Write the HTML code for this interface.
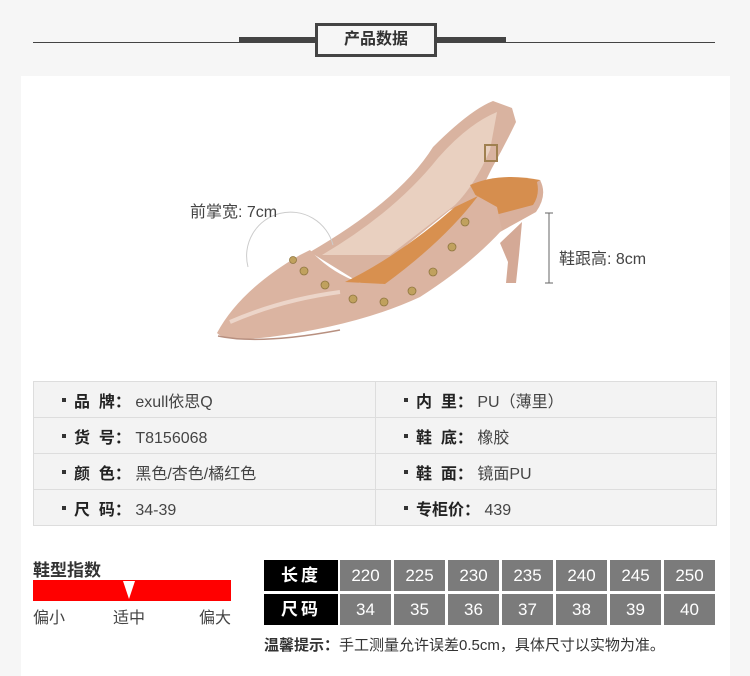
<!DOCTYPE html>
<html><head><meta charset="utf-8"><style>
body{margin:0;width:750px;height:671px;background:#f6f6f6;font-family:"Liberation Sans","Noto Sans CJK SC",sans-serif;position:relative;overflow:hidden;color:#333}
.a{position:absolute}
.panel{left:21px;top:76px;width:709px;height:600px;background:#fff}
table.p{position:absolute;left:33px;top:381px;width:684px;border-collapse:collapse;font-size:16px}
table.p td{border:1px solid #ddd;background:#f3f3f3;height:35px;padding:0 0 0 28px;color:#444}
table.p b{font-weight:bold;color:#222}
.sq{display:inline-block;width:4px;height:4px;background:#333;margin-right:8px;vertical-align:middle;position:relative;top:-2px}
.c{position:absolute;height:31px;background:#7b7b7b;color:#fff;font-size:17px;text-align:center;line-height:31px;width:51px}
.k{background:#000;font-weight:bold;width:74px;left:264px;letter-spacing:3px}
</style></head><body>
<div class="a" style="left:33px;top:42px;width:682px;height:1px;background:#444"></div>
<div class="a" style="left:239px;top:37px;width:267px;height:6px;background:#444"></div>
<div class="a" style="left:315px;top:23px;width:116px;height:28px;border:3px solid #444;background:#f6f6f6;text-align:center;line-height:28px;font-weight:bold;font-size:16px;color:#333">产品数据</div>
<div class="a panel"></div>
<svg class="a" style="left:0;top:0" width="750" height="380">
<path d="M310 252 Q400 200 433 147 Q470 110 493 101 L512 108 L516 122 Q505 145 492 168 Q482 188 477 200 L450 210 L360 283 Z" fill="#d9b3a0"/>
<path d="M322 255 Q395 212 438 158 Q468 124 497 112 L490 150 Q475 185 455 205 L390 255 Z" fill="#e9d0c0"/>
<path d="M470 185 Q500 172 540 180 Q546 195 535 210 L490 222 Z" fill="#d68e4e"/>
<path d="M540 180 Q548 195 536 212 L500 232 L495 215 L533 205 Q540 195 537 182 Z" fill="#d9b09c"/>
<path d="M500 243 L522 222 L519 255 L516 283 L506 283 L508 262 Z" fill="#d4a996"/>
<path d="M217 333 Q240 290 300 255 L310 250 Q330 272 360 283 Q420 250 470 192 L497 207 L502 230 Q470 265 420 297 Q360 325 270 337 Q225 342 217 333 Z" fill="#dbb4a1"/>
<path d="M345 282 Q400 255 455 207 L478 196 Q445 240 385 284 Z" fill="#d8904f"/>
<path d="M230 322 Q280 300 340 292" stroke="#f3e3da" stroke-width="4" fill="none" opacity=".7"/>
<path d="M218 336 Q260 345 340 330" stroke="#b89080" stroke-width="1.5" fill="none"/>
<rect x="485" y="145" width="12" height="16" fill="none" stroke="#a08050" stroke-width="2"/>
<path d="M248 267 A42 42 0 0 1 333 245" stroke="#ccc" fill="none" stroke-width="1"/>
<g fill="#c0a15e" stroke="#8f7640" stroke-width=".8"><circle cx="293" cy="260" r="3.5"/><circle cx="304" cy="271" r="4"/><circle cx="325" cy="285" r="4"/><circle cx="353" cy="299" r="4"/><circle cx="384" cy="302" r="4"/><circle cx="412" cy="291" r="4"/><circle cx="433" cy="272" r="4"/><circle cx="452" cy="247" r="4"/><circle cx="465" cy="222" r="4"/></g>
<line x1="549" y1="213" x2="549" y2="283" stroke="#666"/>
<line x1="545" y1="213" x2="553" y2="213" stroke="#666"/>
<line x1="545" y1="283" x2="553" y2="283" stroke="#666"/>
</svg>
<div class="a" style="left:190px;top:198px;font-size:16px;color:#444">前掌宽: 7cm</div>
<div class="a" style="left:559px;top:245px;font-size:16px;color:#444">鞋跟高: 8cm</div>
<table class="p">
<tr><td style="width:313px"><span class="sq"></span><b>品&nbsp; 牌：</b> exull依思Q</td><td><span class="sq"></span><b>内&nbsp; 里：</b> PU（薄里）</td></tr>
<tr><td><span class="sq"></span><b>货&nbsp; 号：</b> T8156068</td><td><span class="sq"></span><b>鞋&nbsp; 底：</b> 橡胶</td></tr>
<tr><td><span class="sq"></span><b>颜&nbsp; 色：</b> 黑色/杏色/橘红色</td><td><span class="sq"></span><b>鞋&nbsp; 面：</b> 镜面PU</td></tr>
<tr><td><span class="sq"></span><b>尺&nbsp; 码：</b> 34-39</td><td><span class="sq"></span><b>专柜价：</b> 439</td></tr>
</table>
<div class="a" style="left:33px;top:556px;font-size:17px;font-weight:bold;color:#333">鞋型指数</div>
<div class="a" style="left:33px;top:580px;width:198px;height:21px;background:#f00"></div>
<svg class="a" style="left:122px;top:580px" width="14" height="20"><path d="M1 1 L13 1 L7 19 Z" fill="#fff"/></svg>
<div class="a" style="left:33px;top:604px;font-size:16px;color:#444">偏小</div>
<div class="a" style="left:113px;top:604px;font-size:16px;color:#444">适中</div>
<div class="a" style="left:199px;top:604px;font-size:16px;color:#444">偏大</div>
<div class="c k" style="top:560px">长度</div>
<div class="c k" style="top:594px">尺码</div>
<div class="c" style="left:340px;top:560px">220</div><div class="c" style="left:394px;top:560px">225</div><div class="c" style="left:448px;top:560px">230</div><div class="c" style="left:502px;top:560px">235</div><div class="c" style="left:556px;top:560px">240</div><div class="c" style="left:610px;top:560px">245</div><div class="c" style="left:664px;top:560px">250</div>
<div class="c" style="left:340px;top:594px">34</div><div class="c" style="left:394px;top:594px">35</div><div class="c" style="left:448px;top:594px">36</div><div class="c" style="left:502px;top:594px">37</div><div class="c" style="left:556px;top:594px">38</div><div class="c" style="left:610px;top:594px">39</div><div class="c" style="left:664px;top:594px">40</div>
<div class="a" style="left:264px;top:634px;font-size:15px;color:#333"><b>温馨提示：</b>手工测量允许误差0.5cm，具体尺寸以实物为准。</div>
</body></html>
